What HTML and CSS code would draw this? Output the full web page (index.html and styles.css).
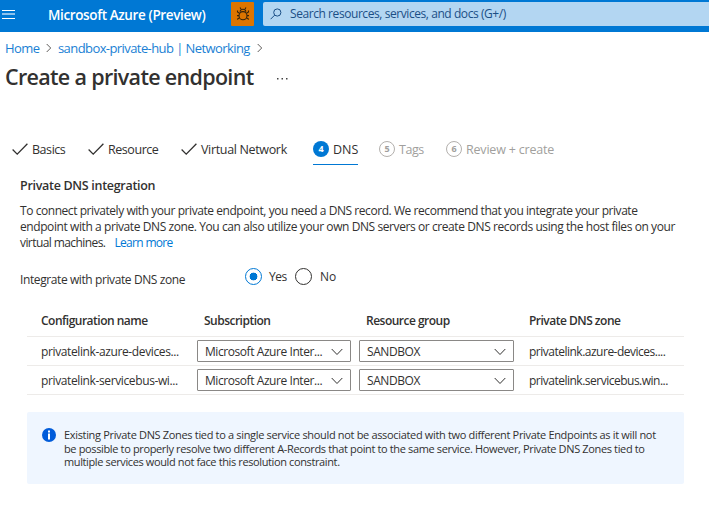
FILE: index.html
```html
<!DOCTYPE html>
<html lang="en">
<head>
<meta charset="utf-8">
<title>Create a private endpoint - Microsoft Azure</title>
<link rel="stylesheet" href="styles.css">
</head>
<body>
<header class="topbar">
  <svg class="menu" width="13" height="9" viewBox="0 0 13 9"><path d="M0 .5h13M0 8.500h13" stroke="#fff"/><path d="M0 4h13" stroke="#8cc1ec" stroke-width="2"/></svg>
  <span class="brand">Microsoft Azure (Preview)</span>
  <span class="bug">
    <svg width="14" height="14" viewBox="0 0 14 14" fill="none" stroke="#35240c" stroke-width="1.100"><path d="M4 .5l1 1.500M10 .5L9 2M4.200 4.800Q4.200 2.200 7 2.200T9.800 4.800"/><ellipse cx="7" cy="8.700" rx="4" ry="4.100"/><path d="M1.500 3.500v1.500l2 1.200M12.500 3.500v1.500l-2 1.200M1 8.600h2M13 8.600h-2M1.700 12.800v-1l1.700-.8M12.300 12.800v-1l-1.700-.8"/></svg>
  </span>
  <div class="search">
    <svg width="12" height="12" viewBox="0 0 12 12" fill="none" stroke="#1b4f86"><circle cx="7.300" cy="4.500" r="3.600"/><path d="M4.700 7.100L.6 11.200"/></svg>
    <span class="search-text">Search resources, services, and docs (G+/)</span>
  </div>
</header>
<nav class="crumbs">
  <a class="c-home">Home</a>
  <svg class="sep" width="6" height="10" viewBox="0 0 6 10"><path d="M.7 1l4 4-4 4"/></svg>
  <a class="c-hub">sandbox-private-hub | Networking</a>
  <svg class="sep" width="6" height="10" viewBox="0 0 6 10"><path d="M.7 1l4 4-4 4"/></svg>
</nav>
<div class="title-row">
  <h1>Create a private endpoint</h1>
  <svg class="more" width="11" height="2" viewBox="0 0 11 2" fill="#444"><path d="M0 0h1.500v1.500H0zM4.500 0H6v1.500H4.500zM9 0h1.500v1.500H9z"/></svg>
</div>
<div class="tabs">
  <span class="tab t1"><svg class="check" width="16" height="12" viewBox="0 0 16 12"><path d="M.6 6.500l4.600 4.600L15.400.7"/></svg><span>Basics</span></span>
  <span class="tab t2"><svg class="check" width="16" height="12" viewBox="0 0 16 12"><path d="M.6 6.500l4.600 4.600L15.400.7"/></svg><span>Resource</span></span>
  <span class="tab t3"><svg class="check" width="16" height="12" viewBox="0 0 16 12"><path d="M.6 6.500l4.600 4.600L15.400.7"/></svg><span>Virtual Network</span></span>
  <span class="tab t4 active"><b class="num">4</b><span>DNS</span></span>
  <span class="tab t5 off"><b class="num">5</b><span>Tags</span></span>
  <span class="tab t6 off"><b class="num">6</b><span>Review + create</span></span>
</div>
<main>
  <h2>Private DNS integration</h2>
  <p class="intro"><span class="l1">To connect privately with your private endpoint, you need a DNS record. We recommend that you integrate your private</span><br><span class="l2">endpoint with a private DNS zone. You can also utilize your own DNS servers or create DNS records using the host files on your</span><br><span class="l3">virtual machines.</span><a class="learn">Learn more</a></p>
  <div class="choice">
    <span class="choice-label">Integrate with private DNS zone</span>
    <span class="radio on"></span><span class="r-yes">Yes</span>
    <span class="radio"></span><span class="r-no">No</span>
  </div>
  <div class="grid">
    <div class="row head"><span>Configuration name</span><span class="inset">Subscription</span><span class="inset">Resource group</span><span class="inset">Private DNS zone</span></div>
    <div class="row">
      <span class="name">privatelink-azure-devices...</span>
      <div class="select"><span>Microsoft Azure Inter...</span><svg class="chev" width="12" height="8" viewBox="0 0 12 8"><path d="M.7 1l5.300 5.500L11.300 1"/></svg></div>
      <div class="select"><span>SANDBOX</span><svg class="chev" width="12" height="8" viewBox="0 0 12 8"><path d="M.7 1l5.300 5.500L11.300 1"/></svg></div>
      <span class="zone">privatelink.azure-devices....</span>
    </div>
    <div class="row">
      <span class="name">privatelink-servicebus-wi...</span>
      <div class="select"><span>Microsoft Azure Inter...</span><svg class="chev" width="12" height="8" viewBox="0 0 12 8"><path d="M.7 1l5.300 5.500L11.300 1"/></svg></div>
      <div class="select"><span>SANDBOX</span><svg class="chev" width="12" height="8" viewBox="0 0 12 8"><path d="M.7 1l5.300 5.500L11.300 1"/></svg></div>
      <span class="zone">privatelink.servicebus.win...</span>
    </div>
  </div>
  <div class="notice">
    <svg width="14" height="14" viewBox="0 0 14 14"><circle cx="7" cy="7" r="7" fill="#015cda"/><path d="M6 2.500h2v2H6zM6 5.500h2V11.500H6z" fill="#fff"/></svg>
    <p>Existing Private DNS Zones tied to a single service should not be associated with two different Private Endpoints as it will not<br><span class="n2">be possible to properly resolve two different A-Records that point to the same service. However, Private DNS Zones tied to</span><br><span class="n3">multiple services would not face this resolution constraint.</span></p>
  </div>
</main>
</body>
</html>
```
FILE: styles.css
```css
* { box-sizing: border-box; }
body { margin: 0; width: 709px; height: 513px; overflow: hidden; background: #fff; color: #323130; font: 12px/16px "Open Sans", "Noto Sans", sans-serif; letter-spacing: -.43px; white-space: nowrap; }
h1, h2, p { margin: 0; }
svg { flex: none; }
.topbar { display: flex; height: 32px; background: #0078d4; align-items: flex-start; }
.menu { margin: 10px 0 0 2px; }
.brand { margin-left: 33px; width: 183px; line-height: 30px; font-size: 13.5px; font-weight: 600; letter-spacing: -.38px; color: #fff; }
.bug { display: flex; width: 23px; height: 24px; margin-top: 2px; align-items: center; justify-content: center; background: #dc7500; border-radius: 1px; }
.search { display: flex; flex: 1; height: 24px; margin: 2px 0 0 9px; padding-left: 7px; align-items: center; background: #b3d6f2; border-radius: 2px 0 0 2px; color: #1b4f86; }
.search-text { margin-left: 8px; }
.crumbs { display: flex; height: 32px; padding-left: 5px; align-items: center; color: #1a7fd4; font-size: 13px; letter-spacing: -.58px; }
.c-home { width: 41px; }
.c-hub { width: 199px; margin-left: 6px; }
.sep, .check, .chev { fill: none; stroke: #605e5c; }
.chev { margin-top: 1px; stroke: #323130; }
.title-row { display: flex; height: 28px; padding-left: 5px; align-items: center; }
.more { margin-top: 1px; }
h1 { width: 272px; padding-bottom: 2px; font-size: 21.500px; line-height: 26px; font-weight: 600; letter-spacing: -.68px; }
.tabs { display: flex; height: 33px; margin-top: 41px; padding-left: 12px; font-size: 12.500px; line-height: 17px; letter-spacing: -.45px; }
.tab { display: flex; height: 32px; padding-top: 8px; gap: 4px; }
.check { stroke: #323130; stroke-width: 1.300; margin-top: 2px; }
.t1 { width: 76px; }
.t2 { width: 93px; }
.t3 { width: 132px; letter-spacing: -.34px; }
.t4 { width: 45px; letter-spacing: 0; }
.t5 { margin-left: 21px; width: 67px; }
.t6 { letter-spacing: -.2px; }
.active { border-bottom: 1px solid #0078d4; }
.num { width: 16px; height: 16px; border-radius: 50%; flex: none; background: #0078d4; color: #fff; font-size: 9px; line-height: 16px; letter-spacing: 0; text-align: center; }
.off { color: #a19f9d; }
.off .num { background: none; border: 1px solid #b3b0ad; color: #a19f9d; line-height: 14px; }
main { padding-left: 20px; }
h2 { margin-top: 12px; font-size: 12.500px; line-height: 16px; font-weight: 600; letter-spacing: -.3px; }
.intro { margin-top: 9px; height: 48px; }
.l1 { letter-spacing: -.44px; }
.l2 { letter-spacing: -.415px; }
.l3 { letter-spacing: -.58px; }
.learn { margin-left: 9px; color: #0078d4; letter-spacing: -.68px; }
.choice { display: flex; height: 18px; margin-top: 17px; }
.choice-label { width: 225px; padding-top: 4px; letter-spacing: -.4px; }
.radio { width: 17px; height: 17px; border: 1px solid #323130; border-radius: 50%; }
.radio.on { border-color: #0078d4; background: radial-gradient(circle, #0078d4 3.600px, transparent 4.200px); }
.r-yes { margin-left: 7px; width: 26px; padding-top: 1px; }
.r-no { margin-left: 8px; padding-top: 1px; letter-spacing: 0; }
.grid { width: 657px; margin: 16px 0 0 7px; }
.row { display: grid; grid-template-columns: 148px 154px 155px 155px; column-gap: 8px; height: 29px; padding-left: 14px; border-bottom: 1px solid #edebe9; align-items: center; }
.head { height: 35px; padding-top: 4px; font-weight: 600; letter-spacing: -.51px; }
.inset, .zone { padding-left: 7px; }
.name, .zone { padding-top: 1px; }
.name { letter-spacing: -.38px; }
.zone { letter-spacing: -.5px; }
.select { display: flex; height: 22px; padding: 0 7px; justify-content: space-between; align-items: center; border: 1px solid #8a8886; border-radius: 1px; }
.select span { padding-top: 2px; }
.notice { display: flex; width: 657px; height: 72px; margin: 17px 0 0 7px; padding: 16px 15px; gap: 8px; background: #eff6ff; border-radius: 2px; }
.notice p { font-size: 11px; line-height: 13.500px; letter-spacing: -.33px; }
.n2 { letter-spacing: -.36px; }
.n3 { letter-spacing: -.38px; }
```
